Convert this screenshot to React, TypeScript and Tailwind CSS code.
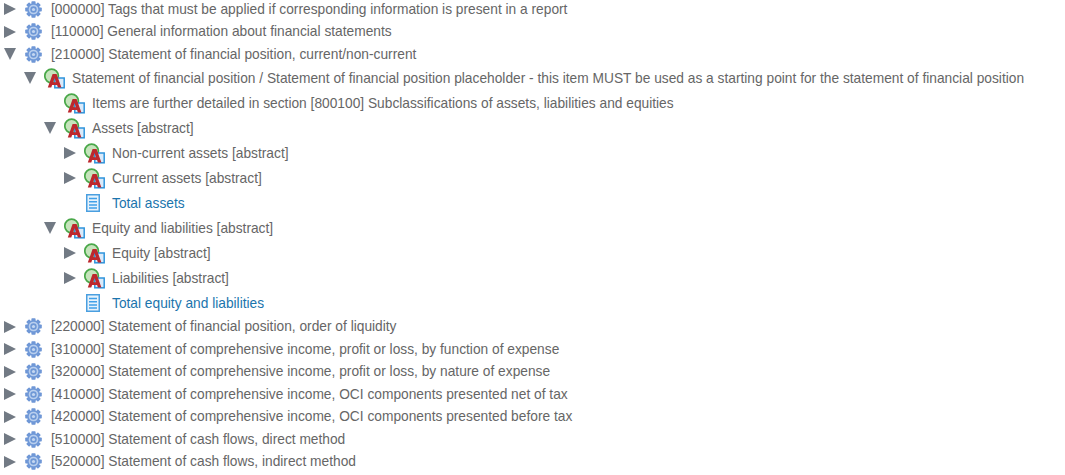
import React from "react";

type Kind = "gear" | "abstract" | "doc";

interface TreeRowProps {
  depth?: number;
  caret?: "right" | "down";
  kind: Kind;
  label: string;
  tall?: boolean;
}

function Caret({ dir }: { dir: "right" | "down" }) {
  return (
    <svg width="12" height="12" viewBox="0 0 12 12" aria-hidden="true">
      <path d={dir === "right" ? "M0 0 L12 6 L0 12 Z" : "M0 0 L12 0 L6 12 Z"} fill="#727a84" />
    </svg>
  );
}

function GearIcon() {
  const teeth = [0, 45, 90, 135, 180, 225, 270, 315];
  return (
    <svg width="17" height="17" viewBox="0 0 17 17" aria-hidden="true">
      {teeth.map((a) => (
        <rect key={a} x="6.4" y="0.2" width="4.2" height="3.6" rx="0.8" fill="#6f97d6" transform={`rotate(${a} 8.5 8.5)`} />
      ))}
      <circle cx="8.5" cy="8.5" r="6.3" fill="#7099d8" />
      <circle cx="8.5" cy="8.5" r="4.8" fill="#b9cfee" />
      <circle cx="8.5" cy="8.5" r="3.2" fill="#6f98d6" />
      <circle cx="8.5" cy="8.5" r="1.6" fill="#c4d7f1" />
    </svg>
  );
}

function AbstractIcon() {
  return (
    <svg width="21" height="21" viewBox="0 0 21 21" aria-hidden="true">
      <circle cx="7.6" cy="8" r="6.8" fill="#c6e4bc" stroke="#4aa84a" strokeWidth="1.7" />
      <rect x="10.8" y="10" width="9.4" height="9.8" fill="#d9eafa" stroke="#2f94dc" strokeWidth="1.5" />
      <path
        d="M3.8 19.6 L8.6 6 L12.6 6 L17.4 19.6 L13.9 19.6 L13.1 17 L8.1 17 L7.3 19.6 Z M9.3 14.2 L11.9 14.2 L10.6 10 Z"
        fill="#bd272d"
        fillRule="evenodd"
      />
    </svg>
  );
}

function DocIcon() {
  return (
    <svg width="14" height="18" viewBox="0 0 14 18" aria-hidden="true">
      <rect x="0.75" y="0.75" width="12.5" height="16.5" fill="#e6f2fc" stroke="#4a9fe0" strokeWidth="1.5" />
      <path d="M3 4.5 H11 M3 7.7 H11 M3 10.9 H11 M3 14.1 H11" stroke="#3fa0e8" strokeWidth="1.5" />
    </svg>
  );
}

function TreeRow({ depth = 0, caret, kind, label, tall }: TreeRowProps) {
  const indent = ["pl-[4px]", "pl-[24px]", "pl-[44px]", "pl-[64px]"][depth];
  return (
    <div className={`flex items-center whitespace-nowrap ${indent} ${tall ? "h-[25px]" : "h-[22.5px]"}`}>
      <span className="flex w-[12px] shrink-0 items-center">{caret && <Caret dir={caret} />}</span>
      {kind === "gear" && (
        <span className="ml-[9px] mr-[9px] flex w-[17px] shrink-0">
          <GearIcon />
        </span>
      )}
      {kind === "abstract" && (
        <span className="ml-[8px] mr-[7px] flex w-[21px] shrink-0">
          <AbstractIcon />
        </span>
      )}
      {kind === "doc" && (
        <span className="ml-[10px] mr-[12px] flex w-[14px] shrink-0">
          <DocIcon />
        </span>
      )}
      <span className={`mt-[2px] ${kind === "doc" ? "text-[#1b75ad]" : "text-[#666666]"}`}>{label}</span>
    </div>
  );
}

const TOP_BEFORE = [
  { caret: "right" as const, label: "[000000] Tags that must be applied if corresponding information is present in a report" },
  { caret: "right" as const, label: "[110000] General information about financial statements" },
  { caret: "down" as const, label: "[210000] Statement of financial position, current/non-current" },
];

const NESTED: TreeRowProps[] = [
  { depth: 1, caret: "down", kind: "abstract", label: "Statement of financial position / Statement of financial position placeholder - this item MUST be used as a starting point for the statement of financial position" },
  { depth: 2, kind: "abstract", label: "Items are further detailed in section [800100] Subclassifications of assets, liabilities and equities" },
  { depth: 2, caret: "down", kind: "abstract", label: "Assets [abstract]" },
  { depth: 3, caret: "right", kind: "abstract", label: "Non-current assets [abstract]" },
  { depth: 3, caret: "right", kind: "abstract", label: "Current assets [abstract]" },
  { depth: 3, kind: "doc", label: "Total assets" },
  { depth: 2, caret: "down", kind: "abstract", label: "Equity and liabilities [abstract]" },
  { depth: 3, caret: "right", kind: "abstract", label: "Equity [abstract]" },
  { depth: 3, caret: "right", kind: "abstract", label: "Liabilities [abstract]" },
  { depth: 3, kind: "doc", label: "Total equity and liabilities" },
];

const TOP_AFTER = [
  "[220000] Statement of financial position, order of liquidity",
  "[310000] Statement of comprehensive income, profit or loss, by function of expense",
  "[320000] Statement of comprehensive income, profit or loss, by nature of expense",
  "[410000] Statement of comprehensive income, OCI components presented net of tax",
  "[420000] Statement of comprehensive income, OCI components presented before tax",
  "[510000] Statement of cash flows, direct method",
  "[520000] Statement of cash flows, indirect method",
];

export default function App() {
  return (
    <div className="h-[475px] w-[1065px] overflow-hidden bg-white font-['Liberation_Sans',Arial,sans-serif] text-[13.75px]">
      <div className="-mt-[2px]">
        {TOP_BEFORE.map((r) => (
          <TreeRow key={r.label} caret={r.caret} kind="gear" label={r.label} />
        ))}
        {NESTED.map((r) => (
          <TreeRow key={r.label} {...r} tall />
        ))}
        {TOP_AFTER.map((label) => (
          <TreeRow key={label} caret="right" kind="gear" label={label} />
        ))}
      </div>
    </div>
  );
}
